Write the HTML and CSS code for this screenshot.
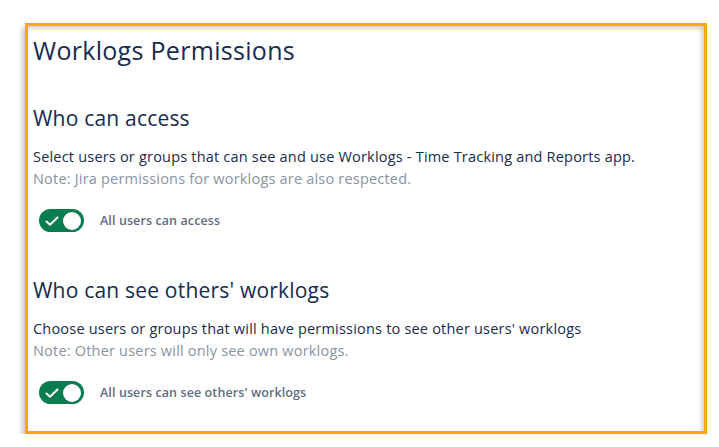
FILE: index.html
```html
<!DOCTYPE html>
<html lang="en">
<head>
<meta charset="utf-8">
<title>Worklogs Permissions</title>
<link rel="stylesheet" href="styles.css">
</head>
<body>
<main class="frame">
  <h1 class="title">Worklogs Permissions</h1>

  <section class="section section-first">
    <h2 class="heading">Who can access</h2>
    <p class="desc">Select users or groups that can see and use Worklogs - Time Tracking and Reports app.</p>
    <p class="note">Note: Jira permissions for worklogs are also respected.</p>
    <div class="toggle-row">
      <span class="toggle">
        <svg class="check" viewBox="0 0 14 12" width="14" height="12"><path d="M1.5 6.5 L5 9.8 L12.5 2.5" fill="none" stroke="#fff" stroke-width="2" stroke-linecap="round" stroke-linejoin="round"/></svg>
        <span class="knob"></span>
      </span>
      <span class="toggle-label">All users can access</span>
    </div>
  </section>

  <section class="section section-second">
    <h2 class="heading">Who can see others' worklogs</h2>
    <p class="desc">Choose users or groups that will have permissions to see other users' worklogs</p>
    <p class="note">Note: Other users will only see own worklogs.</p>
    <div class="toggle-row">
      <span class="toggle">
        <svg class="check" viewBox="0 0 14 12" width="14" height="12"><path d="M1.5 6.5 L5 9.8 L12.5 2.5" fill="none" stroke="#fff" stroke-width="2" stroke-linecap="round" stroke-linejoin="round"/></svg>
        <span class="knob"></span>
      </span>
      <span class="toggle-label">All users can see others' worklogs</span>
    </div>
  </section>
</main>
</body>
</html>
```

FILE: styles.css
```css
* { box-sizing: border-box; }

html, body {
  margin: 0;
  padding: 0;
  background: #ffffff;
}

body {
  font-family: "Open Sans", "Noto Sans", sans-serif;
  color: #172B4D;
  padding: 23px 0 0 25px;
}

.frame {
  width: 682px;
  height: 411px;
  border: 3px solid #F5A90A;
  background: #ffffff;
  padding: 8px 0 0 5px;
  box-shadow: -2px 4px 6px rgba(0, 0, 0, 0.28), inset -4px 4px 5px -2px rgba(0, 0, 0, 0.22);
  display: flex;
  flex-direction: column;
}

.title {
  margin: 0;
  font-size: 25px;
  line-height: 32px;
  font-weight: 500;
  letter-spacing: 0.3px;
}

.section {
  display: flex;
  flex-direction: column;
}

.section-first { margin-top: 38px; }
.section-second { margin-top: 44px; }

.heading {
  margin: 0 0 14px 0;
  font-size: 21px;
  line-height: 28px;
  font-weight: 500;
  letter-spacing: 0.2px;
}

.desc, .note {
  margin: 0;
  font-size: 14.5px;
  line-height: 22px;
  letter-spacing: 0.2px;
}

.desc { color: #172B4D; }
.note { color: #8993A4; }

.toggle-row {
  display: flex;
  align-items: center;
  margin-top: 19px;
  padding-left: 6px;
}

.toggle {
  width: 45px;
  height: 23px;
  border-radius: 12px;
  background: #0A7D50;
  display: flex;
  align-items: center;
  justify-content: space-between;
  padding: 0 3px 0 6px;
}

.check { display: block; }

.knob {
  width: 18px;
  height: 18px;
  border-radius: 50%;
  background: #ffffff;
}

.toggle-label {
  margin-left: 16px;
  font-size: 12.5px;
  font-weight: 600;
  color: #5E6C84;
  letter-spacing: 0.1px;
}
```
